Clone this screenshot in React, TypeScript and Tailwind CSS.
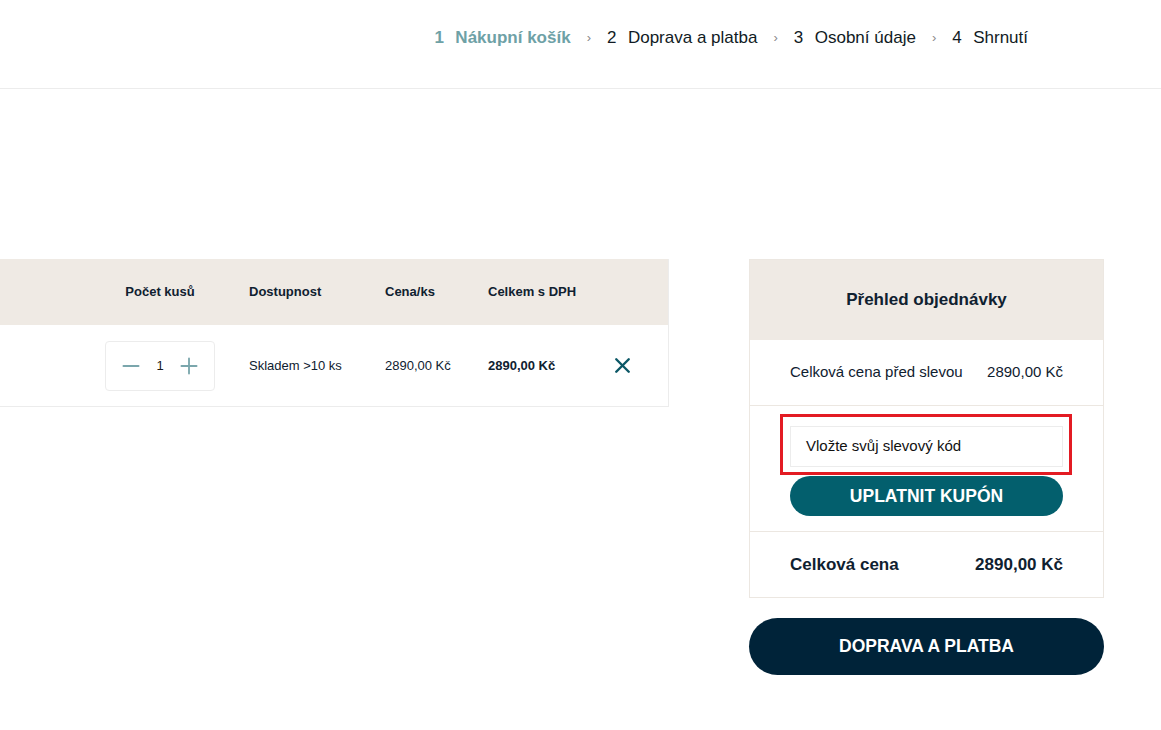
import { Minus, Plus, X } from 'lucide-react';

const steps = [
  { n: 1, label: 'Nákupní košík', active: true },
  { n: 2, label: 'Doprava a platba' },
  { n: 3, label: 'Osobní údaje' },
  { n: 4, label: 'Shrnutí' },
];

function Stepper() {
  return (
    <div className="flex h-[89px] items-center justify-end border-b border-[#ececec] pr-[133px] pb-[12px]">
      {steps.map((s, i) => (
        <div key={s.n} className="flex items-center">
          {i > 0 && <span className="mx-[16px] text-[13px] text-[#8a8a8a]">›</span>}
          <span
            className={`text-[17px] ${s.active ? 'font-bold text-[#6ea1a6]' : 'text-[#111b24]'}`}
          >
            {s.n}
          </span>
          <span
            className={`ml-[11.5px] text-[17px] ${s.active ? 'font-bold text-[#6ea1a6]' : 'text-[#111b24]'}`}
          >
            {s.label}
          </span>
        </div>
      ))}
    </div>
  );
}

function CartTable() {
  return (
    <div className="w-[669px] border-r border-[#ececec]">
      <div className="flex h-[66px] items-center bg-[#efeae4] text-[13px] font-bold text-[#0f2130]">
        <div className="w-[105px]" />
        <div className="w-[110px] text-center">Počet kusů</div>
        <div className="w-[34px]" />
        <div className="w-[136px]">Dostupnost</div>
        <div className="w-[103px]">Cena/ks</div>
        <div className="w-[112px]">Celkem s DPH</div>
      </div>
      <div className="flex h-[82px] items-center border-b border-[#ececec] text-[13px] text-[#0f2130]">
        <div className="w-[105px]" />
        <div className="flex h-[50px] w-[110px] items-center justify-between rounded border border-[#ececec] px-[12px]">
          <Minus size={26} strokeWidth={1.7} className="text-[#7aa6ac]" />
          <span className="text-[#1a1a1a]">1</span>
          <Plus size={26} strokeWidth={1.7} className="text-[#7aa6ac]" />
        </div>
        <div className="w-[34px]" />
        <div className="w-[136px]">Skladem &gt;10 ks</div>
        <div className="w-[103px]">2890,00 Kč</div>
        <div className="w-[112px] font-bold">2890,00 Kč</div>
        <div className="flex w-[45px] justify-center">
          <X size={25} strokeWidth={2.3} className="text-[#0b5766]" />
        </div>
      </div>
    </div>
  );
}

function Summary() {
  return (
    <div className="w-[355px]">
      <div className="border border-[#ece7e1] text-[#0f2130]">
        <div className="flex h-[80px] items-center justify-center bg-[#efeae4] text-[17px] font-bold">
          Přehled objednávky
        </div>
        <div className="flex h-[66px] items-center justify-between border-b border-[#ece7e1] px-[40px] text-[15px]">
          <span>Celková cena před slevou</span>
          <span>2890,00 Kč</span>
        </div>
        <div className="border-b border-[#ece7e1] px-[40px] pt-[20px] pb-[15px]">
          <div className="relative">
            <div className="flex h-[41px] items-center border border-[#ececec] px-[15px] text-[15px] text-[#111]">
              Vložte svůj slevový kód
            </div>
            <div className="pointer-events-none absolute -top-[12px] -left-[10px] -right-[9px] -bottom-[8px] border-[3px] border-[#e31b23]" />
          </div>
          <button className="mt-[9px] flex h-[40px] w-full items-center justify-center rounded-full bg-[#035f6d] text-[17.5px] font-bold text-white">
            UPLATNIT KUPÓN
          </button>
        </div>
        <div className="flex h-[65px] items-center justify-between px-[40px] text-[17px] font-bold">
          <span>Celková cena</span>
          <span>2890,00 Kč</span>
        </div>
      </div>
      <button className="mt-[20px] flex h-[57px] w-full items-center justify-center rounded-full bg-[#002339] text-[17.5px] font-bold text-white">
        DOPRAVA A PLATBA
      </button>
    </div>
  );
}

export default function App() {
  return (
    <div className="min-h-[730px] bg-white font-['Liberation_Sans',Arial,sans-serif]">
      <Stepper />
      <div className="mt-[170px] flex items-start gap-[80px]">
        <CartTable />
        <Summary />
      </div>
    </div>
  );
}
